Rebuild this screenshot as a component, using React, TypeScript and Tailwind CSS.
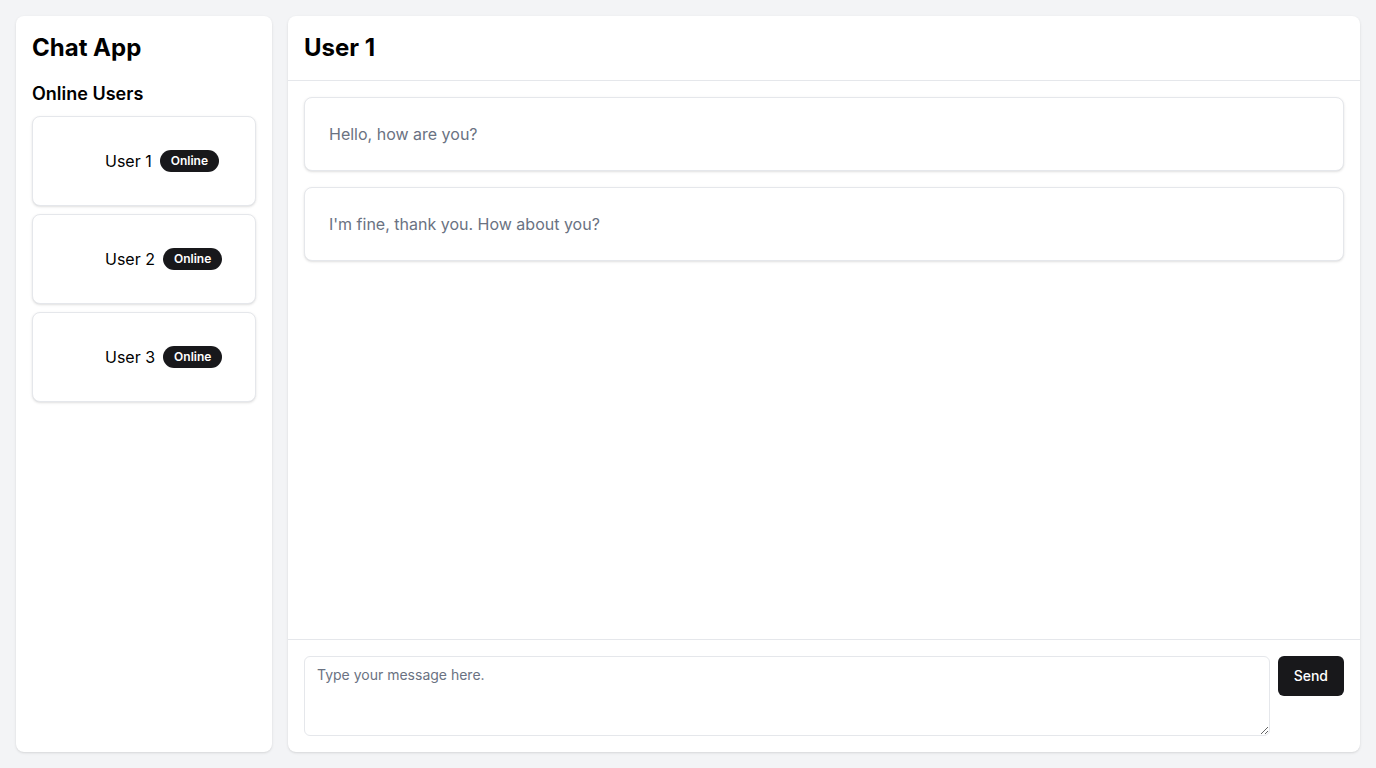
import React from 'react';

const users = ['User 1', 'User 2', 'User 3'];

const messages = ['Hello, how are you?', "I'm fine, thank you. How about you?"];

export default function App() {
  return (
    <div
      className="flex h-screen gap-4 bg-gray-100 p-4 text-black"
      style={{ fontFamily: 'Inter, "Noto Sans", sans-serif' }}
    >
      {/* Sidebar */}
      <aside className="flex w-64 shrink-0 flex-col rounded-lg bg-white p-4 shadow">
        <h1 className="text-2xl font-bold">Chat App</h1>
        <h2 className="mt-4 text-lg font-semibold">Online Users</h2>
        <div className="mt-2 flex flex-col gap-2">
          {users.map((u) => (
            <div key={u} className="rounded-lg border border-gray-200 bg-white shadow-sm">
              <div className="flex items-center gap-2 p-6">
                <div className="h-10 w-10 shrink-0 rounded-full" />
                <span className="text-base">{u}</span>
                <span className="rounded-full border border-transparent bg-[#18181b] px-2.5 py-0.5 text-xs font-semibold text-white">
                  Online
                </span>
              </div>
            </div>
          ))}
        </div>
      </aside>

      {/* Main chat */}
      <main className="flex min-w-0 flex-1 flex-col rounded-lg bg-white shadow">
        <div className="border-b border-gray-200 p-4">
          <h2 className="text-2xl font-bold">User 1</h2>
        </div>
        <div className="flex flex-1 flex-col gap-4 overflow-auto p-4">
          {messages.map((m) => (
            <div key={m} className="rounded-lg border border-gray-200 bg-white shadow-sm">
              <p className="p-6 text-base text-gray-500">{m}</p>
            </div>
          ))}
        </div>
        <div className="flex items-start gap-2 border-t border-gray-200 p-4">
          <textarea
            className="h-20 flex-1 rounded-md border border-gray-200 bg-white px-3 py-2 text-sm placeholder:text-gray-500 focus:outline-none"
            placeholder="Type your message here."
          />
          <button className="h-10 rounded-md bg-[#18181b] px-4 text-sm font-medium text-white">
            Send
          </button>
        </div>
      </main>
    </div>
  );
}
